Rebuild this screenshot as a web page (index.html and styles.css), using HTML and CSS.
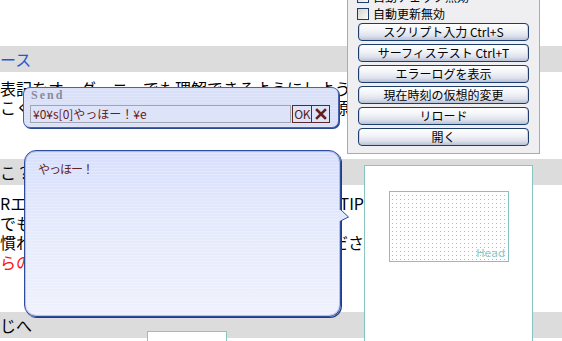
FILE: index.html
```html
<!DOCTYPE html>
<html lang="ja">
<head>
<meta charset="utf-8">
<title>Send</title>
<link rel="stylesheet" href="styles.css">
</head>
<body>
<div class="doc">
  <div class="band band-top"><span class="link">ース</span></div>
  <div class="para para-1">
    <p class="ln ln-narrow"><span>表記をオーダーニーでも理解できるようにしよう</span><span>解わカ</span></p>
    <p class="ln ln-narrow"><span>こくい</span><span>源</span></p>
  </div>
  <div class="band band-mid"><span>こ？</span></div>
  <div class="para para-2">
    <p class="ln ln-wide"><span>Rエシ</span><span>TIP</span></p>
    <p class="ln ln-wide"><span>でも絹</span><span></span></p>
    <p class="ln ln-wide"><span>慣れ</span><span>ださ</span></p>
    <p class="ln ln-wide red"><span>らの。</span><span></span></p>
  </div>
  <div class="band band-bot"><span>じへ</span></div>
</div>

<div class="field-box"></div>

<div class="shell-box">
  <div class="head-box"><span class="head-label">Head</span></div>
</div>

<div class="panel">
  <label class="chk"><span class="box"></span>自動チェック無効</label>
  <label class="chk"><span class="box"></span>自動更新無効</label>
  <div class="btns">
    <div class="btn">スクリプト入力 Ctrl+S</div>
    <div class="btn">サーフィステスト Ctrl+T</div>
    <div class="btn">エラーログを表示</div>
    <div class="btn">現在時刻の仮想的変更</div>
    <div class="btn">リロード</div>
    <div class="btn">開く</div>
  </div>
</div>

<div class="send">
  <div class="send-title">Send</div>
  <div class="send-row">
    <div class="send-input">¥0¥s[0]やっほー！¥e</div>
    <div class="send-ok">OK</div>
    <div class="send-x"><svg width="12" height="12" viewBox="0 0 12 12"><path d="M2 2 L10 10 M10 2 L2 10" stroke="#6a1f1f" stroke-width="2.6" stroke-linecap="square"/></svg></div>
  </div>
</div>

<div class="balloon">
  <div class="balloon-text">やっほー！</div>
  <svg class="tail" width="11" height="15" viewBox="0 0 11 15"><path d="M0 1 L2 1 L9.5 8 L2 12 L0 12 Z" fill="#e3e9fc"/><path d="M1.5 0.5 L9.5 8 L1.5 12" fill="none" stroke="#2e4c9c" stroke-width="1"/></svg>
</div>
</body>
</html>
```
FILE: styles.css
```css
html, body {
  margin: 0;
  padding: 0;
}
body {
  width: 562px;
  height: 341px;
  overflow: hidden;
  position: relative;
  background: #ffffff;
  font-family: "Noto Sans CJK JP", "Noto Sans", sans-serif;
  color: #000;
}
.doc {
  padding-top: 46px;
}
.band {
  height: 26px;
  background: #dcdcdc;
  font-size: 16px;
  line-height: 26px;
  white-space: nowrap;
}
.link {
  color: #1f5ad0;
}
.para {
  font-size: 16px;
}
.para-1 {
  margin: 7px 0 42px;
}
.para-2 {
  margin: 9px 0 40px;
}
.ln {
  margin: 0;
  height: 19.5px;
  line-height: 19.5px;
  display: flex;
  justify-content: space-between;
  white-space: nowrap;
  overflow: hidden;
}
.para-1 .ln {
  height: 19px;
  line-height: 19px;
}
.ln-narrow {
  width: 349px;
}
.ln-wide {
  width: 364px;
}
.red {
  color: #ff1010;
}

/* field under the bottom band */
.field-box {
  position: absolute;
  left: 147px;
  top: 331px;
  width: 80px;
  height: 30px;
  box-sizing: border-box;
  background: #fff;
  border: 1px solid #8cc4c0;
}

/* shell surface */
.shell-box {
  position: absolute;
  left: 364px;
  top: 165px;
  width: 169px;
  height: 200px;
  box-sizing: border-box;
  background: #fff;
  border: 1px solid #88c4c0;
  padding: 25px 0 0 24px;
}
.head-box {
  width: 120px;
  height: 71px;
  box-sizing: border-box;
  border: 1px solid #88c0c0;
  background:
    linear-gradient(to bottom, transparent 1px, #fff 1px) 2px 3px / 4px 4px,
    linear-gradient(to right, #96caca 1px, #fff 1px) 2px 3px / 4px 4px;
  display: flex;
  justify-content: flex-end;
  align-items: flex-end;
  padding: 0 3px 1px 0;
}
.head-label {
  font-family: "DejaVu Sans", sans-serif;
  font-size: 11px;
  line-height: 13px;
  color: #8cc8c8;
}

/* control panel */
.panel {
  position: absolute;
  left: 347px;
  top: -12px;
  width: 193px;
  height: 166px;
  box-sizing: border-box;
  background: #efeff1;
  border: 1px solid #a9a9b8;
  padding: 0 10px 7px 9px;
  font-size: 12px;
}
.chk {
  display: flex;
  align-items: center;
  height: 15px;
  gap: 4px;
  line-height: 15px;
  white-space: nowrap;
}
.chk:first-child {
  margin-bottom: 2px;
}
.box {
  width: 12px;
  height: 12px;
  box-sizing: border-box;
  border: 1px solid #1c3c6c;
  background: linear-gradient(135deg, #d4d2ca, #fbfbf8);
}
.btns {
  margin: 2px 0 0 1px;
  display: flex;
  flex-direction: column;
  gap: 3px;
}
.btn {
  width: 171px;
  height: 18px;
  box-sizing: border-box;
  border: 1px solid #1d3d6b;
  border-radius: 4px;
  background: linear-gradient(#ffffff 0%, #f3f4f8 40%, #dde1ec 75%, #b9c1d6 100%);
  box-shadow: inset 1px 0 0 #cfd5e4, inset -1px 0 0 #cfd5e4;
  text-align: center;
  font-size: 12px;
  line-height: 16px;
  white-space: nowrap;
  color: #000;
}

/* send box */
.send {
  position: absolute;
  left: 23px;
  top: 87px;
  width: 316px;
  height: 41px;
  box-sizing: border-box;
  border: 1px solid #4763ad;
  border-radius: 7px;
  box-shadow: 1px 1px 0 #2a4690;
  background:
    repeating-linear-gradient(0deg, rgba(255,255,255,0.18) 0 1px, transparent 1px 3px),
    #d9e0f8;
  padding: 0 8px 0 6px;
}
.send-title {
  height: 17px;
  line-height: 14px;
  font-family: "Liberation Serif", serif;
  font-weight: bold;
  font-size: 12px;
  letter-spacing: 2px;
  color: #8a8a98;
  padding-left: 1px;
}
.send-row {
  display: flex;
  height: 18px;
}
.send-input {
  width: 262px;
  height: 18px;
  box-sizing: border-box;
  border: 1px solid #a2a4b0;
  background: #dde4f9;
  color: #6a1818;
  font-size: 12px;
  line-height: 16px;
  padding-left: 2px;
  white-space: nowrap;
}
.send-ok {
  margin-left: 1px;
  width: 20px;
  height: 18px;
  box-sizing: border-box;
  border: 1px solid #5a2828;
  background: #dde4f9;
  color: #5a2020;
  font-size: 12px;
  line-height: 16px;
  text-align: center;
  letter-spacing: -0.5px;
}
.send-x {
  width: 18px;
  height: 18px;
  box-sizing: border-box;
  border: 1px solid #5a2828;
  border-left: none;
  background: #dde4f9;
  display: flex;
  align-items: center;
  justify-content: center;
}

/* balloon */
.balloon {
  position: absolute;
  left: 24px;
  top: 150px;
  width: 317px;
  height: 167px;
  box-sizing: border-box;
  border: 1px solid #2e4c9c;
  border-radius: 12px;
  box-shadow: inset 0 0 0 1px rgba(130, 155, 225, 0.55), 1px 1px 0 #1f3c88;
  background:
    repeating-linear-gradient(0deg, rgba(255,255,255,0.22) 0 1px, transparent 1px 3px),
    linear-gradient(#d7dffc, #e6ebfc 50%, #eef1fd);
  padding: 10px 0 0 13px;
}
.balloon-text {
  font-size: 12px;
  line-height: 16px;
  letter-spacing: -1px;
  color: #5e2424;
}
.tail {
  position: absolute;
  right: -10px;
  top: 58px;
}
```
